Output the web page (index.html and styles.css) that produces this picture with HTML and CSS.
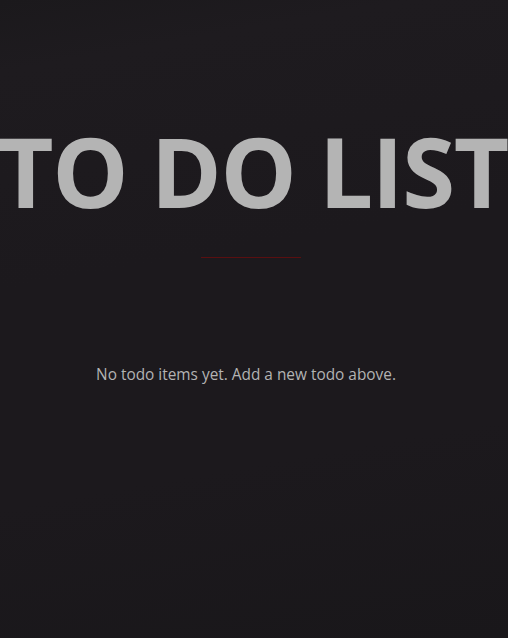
FILE: index.html
```html
<!DOCTYPE html>
<html lang="en">
<head>
<meta charset="utf-8">
<title>To Do List</title>
<link rel="stylesheet" href="styles.css">
</head>
<body>
<main class="app">
  <h1 class="title">TO DO LIST</h1>
  <div class="divider"></div>
  <p class="empty">No todo items yet. Add a new todo above.</p>
</main>
</body>
</html>
```
FILE: styles.css
```css
html, body {
  margin: 0;
  padding: 0;
  height: 100%;
}
body {
  background: linear-gradient(170deg, #1b191c 0%, #1e1b1f 10%, #1c191d 40%, #1c191d 70%, #19171a 100%);
  font-family: "Open Sans", "Noto Sans", sans-serif;
  overflow: hidden;
}
.app {
  display: flex;
  flex-direction: column;
  align-items: center;
  padding-top: 111px;
}
.title {
  margin: 0 2px 0 0;
  font-size: 96px;
  font-weight: 700;
  line-height: 120px;
  color: #b4b4b4;
  white-space: nowrap;
  letter-spacing: -1.4px;
}
.divider {
  width: 100px;
  height: 1px;
  background: #5a0f10;
  margin: 26px 6px 0 0;
}
.empty {
  margin: 106px 16px 0 0;
  font-size: 15.4px;
  color: #b3b3b3;
}
```
